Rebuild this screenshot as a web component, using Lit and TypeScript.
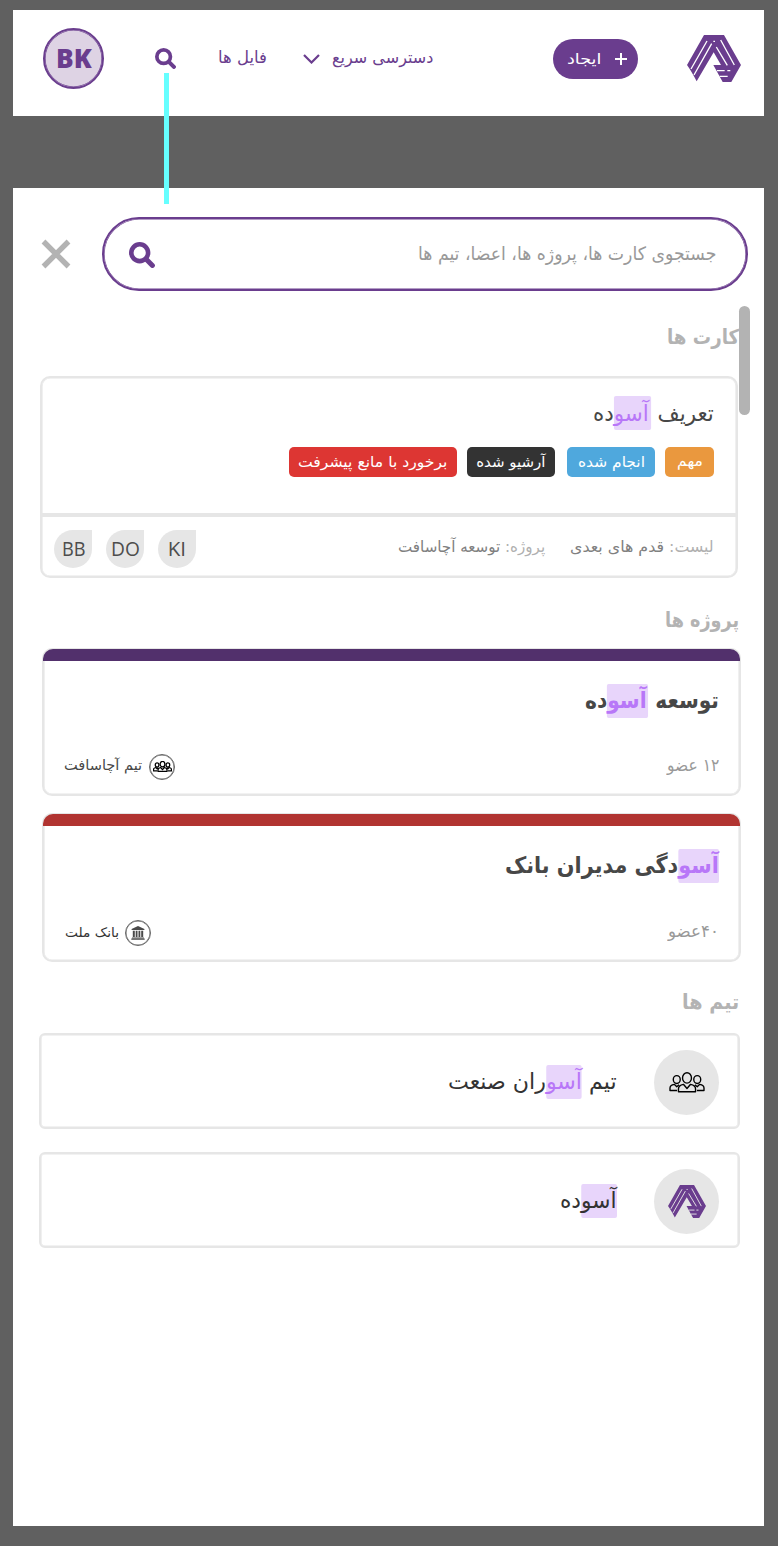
import { LitElement, html, css, svg } from "lit";
import { customElement, property } from "lit/decorators.js";
import { styleMap } from "lit/directives/style-map.js";

const searchIcon = (size: number) => html`<svg width=${size} height=${size} viewBox="0 0 26 26">
  <circle cx="10.7" cy="10.7" r="8.4" fill="none" stroke="#6a3d8e" stroke-width="4.6" />
  <path d="M17.5 17.5L23.4 23.4" stroke="#6a3d8e" stroke-width="5" stroke-linecap="round" />
</svg>`;

const logo = (w: number, gap: string) => html`<svg width=${w} height=${w * 0.87} viewBox="0 0 162 141">
  <path fill="#6a3d8e" d="M51 0H111L162 90L133 141H107L79 90H102L80 52L29 139L20 122L10 105L0 90Z" />
  <path stroke=${gap} stroke-width="4" fill="none" d="M60 18L12 102M74 26L21 120M88 36L121 91M101 15L142 90M79 19H84M90 107H113M121 107H130M98 124H122" />
</svg>`;

const people = (w: number, sw: number) => html`<svg width=${w} height=${w * 0.58} viewBox="0 0 36 21">
  <g fill="none" stroke="#000" stroke-width=${sw} stroke-linejoin="round">
    ${svg`<ellipse cx="18" cy="6" rx="4.5" ry="5.2" />
    <ellipse cx="7.7" cy="7.6" rx="3.5" ry="4" />
    <ellipse cx="28.3" cy="7.6" rx="3.5" ry="4" />
    <path d="M9.4 19.9V17Q9.4 13.4 14.4 12.4L18 16.6L21.6 12.4Q26.6 13.4 26.6 17V19.9Z" />
    <path d="M8 18.6H.9V16Q.9 13.2 5.2 12.4L7.7 14.8L10 12.8" />
    <path d="M28 18.6H35.1V16Q35.1 13.2 30.8 12.4L28.3 14.8L26 12.8" />`}
  </g>
</svg>`;

const bank = html`<svg width="14" height="14" viewBox="0 0 14 14">
  <path fill="#4a4a4a" d="M7 0L13.4 3V4H.6V3ZM1.8 4.8H3.8V11H1.8ZM4.7 4.8H6.5V11H4.7ZM7.5 4.8H9.3V11H7.5ZM10.2 4.8H12.2V11H10.2ZM1 11.4H13V12.2H1ZM.3 12.4H13.7V13.8H.3Z" />
</svg>`;

/** A single line of text condensed or widened to a given measure. */
@customElement("fit-text")
class FitText extends LitElement {
  @property({ type: Number }) measure = 100;
  static styles = css`
    :host { display: block; flex: none; white-space: nowrap; direction: rtl; }
    .line { display: inline-block; transform-origin: 100% 50%; }
  `;
  async firstUpdated() {
    await document.fonts.ready;
    const line = this.renderRoot.querySelector(".line") as HTMLElement;
    this.style.width = `${this.measure}px`;
    const natural = line.offsetWidth;
    if (natural) line.style.transform = `scaleX(${this.measure / natural})`;
  }
  render() {
    return html`<span class="line"><slot></slot></span>`;
  }
}

@customElement("app-root")
class AppRoot extends LitElement {
  static styles = css`
    :host {
      display: block; box-sizing: border-box; height: 1546px; padding: 10px 14px 0 13px;
      background: #606060; direction: rtl; overflow: hidden; position: relative;
      font-family: "DejaVu Sans", sans-serif; color: #474747;
    }
    * { box-sizing: border-box; }
    svg { display: block; flex: none; }
    .header { height: 106px; background: #fff; display: flex; align-items: center; padding: 0 23px 9px 30px; color: #6a3d8e; font-size: 16.5px; }
    .create { width: 85px; height: 40px; border-radius: 20px; background: #6a3d8e; color: #fff; display: flex; align-items: center; gap: 14px; padding-right: 11px; margin-right: 49px; font-size: 14.5px; }
    .quick { margin-right: 120px; display: flex; align-items: center; gap: 12px; }
    .quick fit-text, .files { padding-bottom: 2px; }
    .files { margin-right: 36px; }
    .find { margin-right: 42px; }
    .me { width: 61px; height: 61px; border-radius: 50%; border: 2px solid #6a3d8e; box-shadow: inset 0 0 0 .6px #6a3d8e; background: #ded3e4; margin-right: 51px; padding-bottom: 3px; display: flex; align-items: center; justify-content: center; font: 800 27px "Open Sans", sans-serif; }
    .link { position: absolute; left: 164px; top: 73px; width: 4.5px; height: 131px; background: #6ff; }
    .panel { margin-top: 72px; height: 1338px; background: #fff; padding: 29px 16px 0 26px; position: relative; }
    .searchrow { display: flex; align-items: center; justify-content: space-between; }
    .search { width: 646px; height: 74px; border: 2px solid #6a3d8e; box-shadow: inset 0 0 0 .6px #6a3d8e; border-radius: 37px; display: flex; align-items: center; justify-content: space-between; padding: 0 30px 0 25px; color: #999; font-size: 18.5px; }
    .search fit-text { padding-bottom: 2px; }
    .search svg { margin-top: 2px; }
    .close { margin-left: 2px; }
    .thumb { position: absolute; left: 726px; top: 118px; width: 11px; height: 109px; border-radius: 5.5px; background: #b3b3b3; }
    .heading { height: 26px; line-height: 26px; font-size: 20.5px; font-weight: bold; color: #b3b3b3; padding-right: 9px; }
    .cards { margin-top: 33px; }
    .projects { margin-top: 29px; }
    .teams { margin-top: 27px; }
    .card, .project, .team { border: 2px solid #e6e6e6; box-shadow: inset 0 0 0 .6px #e6e6e6; }
    .card { margin: 26px 10px 0 1px; height: 202px; border-radius: 10px; }
    .cardtop { height: 139px; border-bottom: 4px solid #e6e6e6; padding: 17px 22px 0 0; }
    .title { height: 38px; line-height: 38px; font-size: 22.5px; display: flex; }
    .cardtop .title { line-height: 37px; }
    .hit { background: #e8d5fb; color: #b877f8; border-radius: 2px; padding: 3px 0 5px; }
    .cardtop .hit { padding: 4px 2px 4px 0; }
    .wide { padding-right: 2px; }
    .plain { color: #333; }
    .tags { display: flex; margin-top: 14px; }
    .tag { height: 30px; border-radius: 5px; color: #fff; font-size: 15px; display: flex; align-items: center; justify-content: center; }
    .tag:first-child { padding-bottom: 3px; }
    .cardfoot { height: 59px; display: flex; align-items: center; padding: 4px 22px 0 12px; font-size: 15.5px; color: #808080; }
    .cardfoot fit-text { padding-bottom: 4px; }
    .dim { color: #b0b0b0; }
    .second { margin-right: 25px; }
    .members { margin-right: auto; display: flex; gap: 14px; }
    .member { width: 38px; height: 38px; background: #e6e6e6; border-radius: 50% 0 50% 50%; display: flex; align-items: center; justify-content: center; font: 20.5px "Open Sans", sans-serif; color: #4d4d4d; }
    .cardfoot .member fit-text { padding: 0 0 2px; }
    .project { margin: 15px 7px 0 3px; height: 148px; border-radius: 10px; display: flex; flex-direction: column; }
    .project + .project { margin-top: 17px; height: 149px; }
    .bar { height: 12px; flex: none; margin: -1px -1px 0 -1px; border-radius: 10px 10px 0 0; }
    .project .title { font-weight: bold; font-size: 23px; margin: 20px 20px 0 0; color: #474747; }
    .meta { display: flex; justify-content: space-between; align-items: center; margin: 32px 20px 0 21px; font-size: 17px; color: #999; height: 28px; }
    .project + .project .meta { margin-top: 33px; }
    .owner { display: flex; align-items: center; gap: 7px; font-size: 14px; color: #474747; margin-left: -1px; padding-top: 3px; }
    .owner.small { margin-left: 0; gap: 6px; font-size: 13px; color: #333; }
    .owner fit-text { padding-bottom: 3px; }
    .owner.small fit-text { padding-bottom: 0; }
    .badge { width: 26px; height: 26px; border: 1px solid #666; box-shadow: inset 0 0 0 .5px #666; border-radius: 50%; display: flex; align-items: center; justify-content: center; }
    .team { margin: 18px 8px 0 0; height: 96px; border-radius: 6px; display: flex; align-items: center; padding-right: 19px; gap: 37px; }
    .team + .team { margin-top: 23px; }
    .team .title { color: #333; }
    .disc { margin-top: 3px; width: 65px; height: 65px; border-radius: 50%; background: #e6e6e6; display: flex; align-items: center; justify-content: center; }
  `;

  tags = [
    { label: "مهم", width: 49, text: 26, bg: "#ea983e", gap: 0 },
    { label: "انجام شده", width: 88, text: 67, bg: "#4fa8dd", gap: 10 },
    { label: "آرشیو شده", width: 88, text: 69, bg: "#333333", gap: 12 },
    { label: "برخورد با مانع پیشرفت", width: 168, text: 149, bg: "#dd3633", gap: 10 },
  ];

  members = [
    { initials: "KI", text: 18 },
    { initials: "DO", text: 29 },
    { initials: "BB", text: 24 },
  ];

  render() {
    return html`
      <div class="header">
        ${logo(54, "#fff")}
        <div class="create">
          <svg width="12" height="12" viewBox="0 0 12 12"><path d="M6 0V12M0 6H12" stroke="#fff" stroke-width="2" /></svg>
          <fit-text measure="34">ایجاد</fit-text>
        </div>
        <div class="quick">
          <fit-text measure="101">دسترسی سریع</fit-text>
          <svg width="17" height="10" viewBox="0 0 17 10"><path d="M1 1L8.5 8.5L16 1" fill="none" stroke="#6a3d8e" stroke-width="2.2" /></svg>
        </div>
        <fit-text class="files" measure="49">فایل ها</fit-text>
        <div class="find">${searchIcon(21)}</div>
        <div class="me"><fit-text measure="36">BK</fit-text></div>
      </div>
      <div class="panel">
        <div class="searchrow">
          <div class="search">
            <fit-text measure="298">جستجوی کارت ها، پروژه ها، اعضا، تیم ها</fit-text>
            ${searchIcon(26)}
          </div>
          <svg class="close" width="30" height="30" viewBox="0 0 30 30"><path d="M2.5 2.5L27.5 27.5M27.5 2.5L2.5 27.5" stroke="#b3b3b3" stroke-width="5.4" /></svg>
        </div>
        <div class="heading cards"><fit-text measure="72">کارت ها</fit-text></div>
        <div class="card">
          <div class="cardtop">
            <div class="title"><fit-text measure="121">تعریف <span class="hit">آسو</span>ده</fit-text></div>
            <div class="tags">
              ${this.tags.map((t) => html`<div class="tag" style=${styleMap({ width: `${t.width}px`, background: t.bg, marginRight: `${t.gap}px` })}>
                <fit-text measure=${t.text}>${t.label}</fit-text>
              </div>`)}
            </div>
          </div>
          <div class="cardfoot">
            <fit-text measure="144"><span class="dim">لیست:</span> قدم های بعدی</fit-text>
            <fit-text class="second" measure="147"><span class="dim">پروژه:</span> توسعه آچاسافت</fit-text>
            <div class="members">
              ${this.members.map((m) => html`<div class="member"><fit-text measure=${m.text}>${m.initials}</fit-text></div>`)}
            </div>
          </div>
        </div>
        <div class="heading projects"><fit-text measure="74">پروژه ها</fit-text></div>
        <div class="project">
          <div class="bar" style=${styleMap({ background: "#52306c" })}></div>
          <div class="title"><fit-text measure="134">توسعه <span class="hit wide">آسو</span>ده</fit-text></div>
          <div class="meta">
            <fit-text measure="52">۱۲ عضو</fit-text>
            <div class="owner"><div class="badge">${people(19, 2.4)}</div><fit-text measure="78">تیم آچاسافت</fit-text></div>
          </div>
        </div>
        <div class="project">
          <div class="bar" style=${styleMap({ background: "#b13431" })}></div>
          <div class="title"><fit-text measure="214"><span class="hit">آسو</span>دگی مدیران بانک</fit-text></div>
          <div class="meta">
            <fit-text measure="51">۴۰عضو</fit-text>
            <div class="owner small"><div class="badge">${bank}</div><fit-text measure="54">بانک ملت</fit-text></div>
          </div>
        </div>
        <div class="heading teams"><fit-text measure="57">تیم ها</fit-text></div>
        <div class="team">
          <div class="disc">${people(36, 1.4)}</div>
          <div class="title"><fit-text measure="169">تیم <span class="hit">آسو</span>ران صنعت</fit-text></div>
        </div>
        <div class="team">
          <div class="disc">${logo(38, "#e6e6e6")}</div>
          <div class="title"><fit-text measure="57"><span class="hit plain">آسو</span>ده</fit-text></div>
        </div>
        <div class="thumb"></div>
      </div>
      <div class="link"></div>
    `;
  }
}
